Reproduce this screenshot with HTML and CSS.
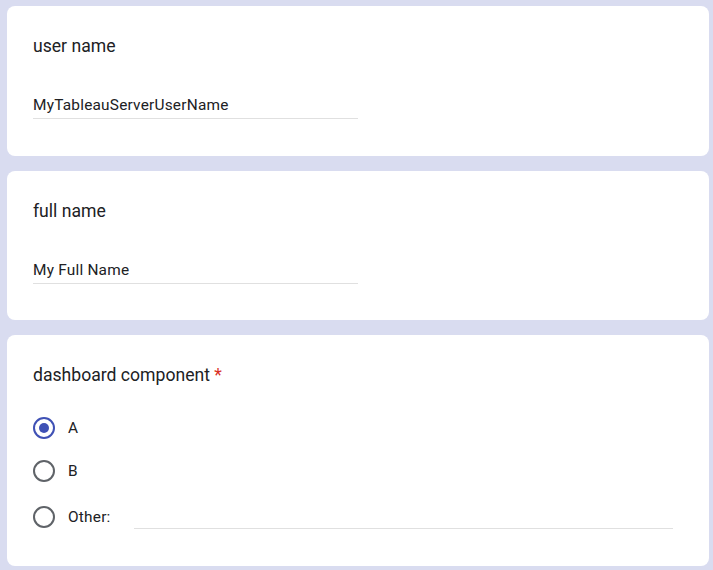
FILE: index.html
```html
<!DOCTYPE html>
<html lang="en">
<head>
<meta charset="utf-8">
<title>Form</title>
<link rel="stylesheet" href="styles.css">
</head>
<body>
<div class="form">
  <div class="card">
    <div class="title">user name</div>
    <div class="field">MyTableauServerUserName</div>
  </div>
  <div class="card">
    <div class="title">full name</div>
    <div class="field">My Full Name</div>
  </div>
  <div class="card card-radio">
    <div class="title">dashboard component <span class="req">*</span></div>
    <div class="options">
      <div class="option">
        <span class="radio checked"><span class="dot"></span></span>
        <span class="label">A</span>
      </div>
      <div class="option">
        <span class="radio"></span>
        <span class="label">B</span>
      </div>
      <div class="option option-other">
        <span class="radio"></span>
        <span class="label">Other:</span>
        <span class="other-input"></span>
      </div>
    </div>
  </div>
</div>
</body>
</html>
```
FILE: styles.css
```css
html, body {
  margin: 0;
  padding: 0;
}
body {
  background: #d9dcf0;
  font-family: Roboto, "Liberation Sans", Arial, sans-serif;
  color: #202124;
}
.form {
  display: flex;
  flex-direction: column;
  gap: 15px;
  padding: 6px 4px 4px 7px;
}
.card {
  background: #fff;
  border-radius: 8px;
  padding: 27px 26px 36.5px 26px;
}
.card-radio {
  padding-bottom: 26px;
}
.title {
  font-size: 17.6px;
  line-height: 26px;
  letter-spacing: 0;
}
.req {
  color: #d93025;
}
.field {
  margin-top: 35px;
  width: 325px;
  font-size: 15.4px;
  line-height: 22px;
  letter-spacing: 0.22px;
  padding-bottom: 2px;
  border-bottom: 1px solid #e0e0e0;
}
.options {
  margin-top: 20px;
  display: flex;
  flex-direction: column;
  gap: 3px;
}
.option {
  display: flex;
  align-items: center;
  height: 40px;
}
.option-other {
  height: 46px;
}
.radio {
  box-sizing: border-box;
  width: 22px;
  height: 22px;
  border: 2px solid #5f6368;
  border-radius: 50%;
  display: flex;
  align-items: center;
  justify-content: center;
  flex: none;
}
.radio.checked {
  border-color: #3f51b5;
}
.dot {
  width: 10px;
  height: 10px;
  border-radius: 50%;
  background: #3f51b5;
}
.label {
  margin-left: 13px;
  font-size: 15.4px;
  letter-spacing: 0.22px;
  line-height: 22px;
}
.other-input {
  flex: 1;
  box-sizing: border-box;
  height: 23px;
  margin: 0 10px 0 23px;
  border-bottom: 1px solid #e0e0e0;
}
```
